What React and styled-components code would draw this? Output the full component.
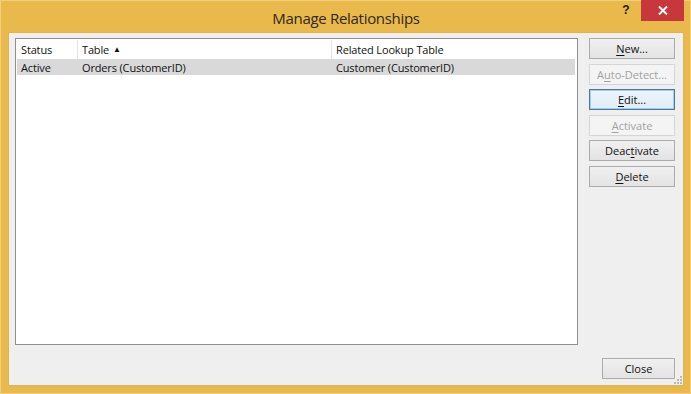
import React from "react";
import styled, { createGlobalStyle } from "styled-components";

const Global = createGlobalStyle`
  html, body {
    margin: 0;
    padding: 0;
    background: #e9b94c;
  }
  body {
    font-family: "Open Sans", "Noto Sans", sans-serif;
  }
`;

const columns = [
  { label: "Status", width: 61 },
  { label: "Table", width: 254, sorted: true },
  { label: "Related Lookup Table", width: 240 },
];

const rows = [["Active", "Orders (CustomerID)", "Customer (CustomerID)"]];

const buttons = [
  { pre: "", key: "N", post: "ew...", disabled: false },
  { pre: "A", key: "u", post: "to-Detect...", disabled: true },
  { pre: "", key: "E", post: "dit...", disabled: false, primary: true },
  { pre: "", key: "A", post: "ctivate", disabled: true },
  { pre: "Deac", key: "t", post: "ivate", disabled: false },
  { pre: "", key: "D", post: "elete", disabled: false },
];

export default function App() {
  return (
    <>
      <Global />
      <Window>
        <TitleBar>
          <Title>Manage Relationships</Title>
          <Controls>
            <HelpButton>?</HelpButton>
            <CloseX>
              <svg width="10" height="9" viewBox="0 0 10 9">
                <path d="M1 0.5 L9 8.5 M9 0.5 L1 8.5" stroke="#fff" strokeWidth="2" />
              </svg>
            </CloseX>
          </Controls>
        </TitleBar>
        <Client>
          <Main>
            <ListBox>
              <HeaderRow>
                {columns.map((c) => (
                  <HeaderCell key={c.label} $w={c.width}>
                    {c.label}
                    {c.sorted && <SortArrow>▲</SortArrow>}
                  </HeaderCell>
                ))}
              </HeaderRow>
              {rows.map((r, i) => (
                <Row key={i} $selected={i === 0}>
                  {r.map((v, j) => (
                    <Cell key={j} $w={columns[j].width}>
                      {v}
                    </Cell>
                  ))}
                </Row>
              ))}
            </ListBox>
            <Side>
              {buttons.map((b, i) => (
                <Button key={i} $disabled={b.disabled} $primary={b.primary}>
                  {b.pre}
                  <u>{b.key}</u>
                  {b.post}
                </Button>
              ))}
            </Side>
          </Main>
          <Footer>
            <CloseButton>Close</CloseButton>
          </Footer>
          <Grip>
            <svg width="8" height="8" viewBox="0 0 8 8">
              <rect x="6" y="0" width="2" height="2" fill="#b8b8b8" />
              <rect x="3" y="3" width="2" height="2" fill="#b8b8b8" />
              <rect x="6" y="3" width="2" height="2" fill="#b8b8b8" />
              <rect x="0" y="6" width="2" height="2" fill="#b8b8b8" />
              <rect x="3" y="6" width="2" height="2" fill="#b8b8b8" />
              <rect x="6" y="6" width="2" height="2" fill="#b8b8b8" />
            </svg>
          </Grip>
        </Client>
      </Window>
    </>
  );
}

const Window = styled.div`
  width: 691px;
  height: 394px;
  box-sizing: border-box;
  background: #e9b94c;
  border: 1px solid #f2cf7a;
  padding: 0 6px 7px 7px;
  display: flex;
  flex-direction: column;
`;

const TitleBar = styled.div`
  height: 31px;
  position: relative;
  display: flex;
  align-items: center;
  justify-content: center;
`;

const Title = styled.div`
  font-family: "Open Sans", "Noto Sans", sans-serif;
  font-size: 15px;
  color: #2e2818;
  margin-top: 2px;
  letter-spacing: -0.3px;
`;

const Controls = styled.div`
  position: absolute;
  top: -1px;
  right: 0;
  display: flex;
  align-items: flex-start;
`;

const HelpButton = styled.div`
  width: 30px;
  height: 20px;
  display: flex;
  align-items: center;
  justify-content: center;
  font-family: "Liberation Sans", sans-serif;
  font-weight: bold;
  font-size: 12px;
  color: #1c1c1c;
`;

const CloseX = styled.div`
  width: 43px;
  height: 21px;
  background: #c8373c;
  display: flex;
  align-items: center;
  justify-content: center;
`;

const Client = styled.div`
  flex: 1;
  background: #efefef;
  border: 1px solid #d9b25a;
  position: relative;
  display: flex;
  flex-direction: column;
  padding: 5px 8px 6px 6px;
`;

const Main = styled.div`
  display: flex;
  gap: 11px;
`;

const ListBox = styled.div`
  width: 563px;
  height: 307px;
  background: #fff;
  border: 1px solid #8e8f91;
  padding: 1px;
  box-sizing: border-box;
`;

const HeaderRow = styled.div`
  display: flex;
  height: 19px;
`;

const HeaderCell = styled.div`
  width: ${(p) => p.$w}px;
  box-sizing: border-box;
  padding-left: 4px;
  border-right: 1px solid #e3e3e3;
  font-size: 11px;
  letter-spacing: -0.15px;
  color: #111;
  display: flex;
  align-items: center;
  &:last-child {
    border-right: none;
  }
`;

const SortArrow = styled.span`
  font-size: 8px;
  margin-left: 4px;
  margin-top: -2px;
  color: #111;
`;

const Row = styled.div`
  display: flex;
  height: 16px;
  background: ${(p) => (p.$selected ? "#d9d9d9" : "transparent")};
  margin-right: 1px;
`;

const Cell = styled.div`
  width: ${(p) => p.$w}px;
  box-sizing: border-box;
  padding-left: 4px;
  font-size: 11px;
  letter-spacing: -0.15px;
  color: #111;
  display: flex;
  align-items: center;
`;

const Side = styled.div`
  width: 86px;
  display: flex;
  flex-direction: column;
  gap: 4.6px;
`;

const Button = styled.div`
  height: 21px;
  box-sizing: border-box;
  display: flex;
  align-items: center;
  justify-content: center;
  font-size: 11px;
  color: ${(p) => (p.$disabled ? "#a2a2a2" : "#111")};
  border: 1px solid
    ${(p) => (p.$primary ? "#3d7bad" : p.$disabled ? "#d5d5d5" : "#acacac")};
  background: ${(p) =>
    p.$disabled
      ? "#f4f4f4"
      : p.$primary
      ? "linear-gradient(#eef5fb, #e1ecf5)"
      : "linear-gradient(#f0f0f0, #e3e3e3)"};
  box-shadow: ${(p) => (p.$primary ? "inset 0 0 0 1px #a8cde9" : "none")};
  u {
    text-underline-offset: 2px;
  }
`;

const Footer = styled.div`
  flex: 1;
  display: flex;
  justify-content: flex-end;
  align-items: flex-end;
`;

const CloseButton = styled(Button)`
  width: 73px;
  height: 21px;
`;

const Grip = styled.div`
  position: absolute;
  right: 1px;
  bottom: 1px;
  line-height: 0;
`;
